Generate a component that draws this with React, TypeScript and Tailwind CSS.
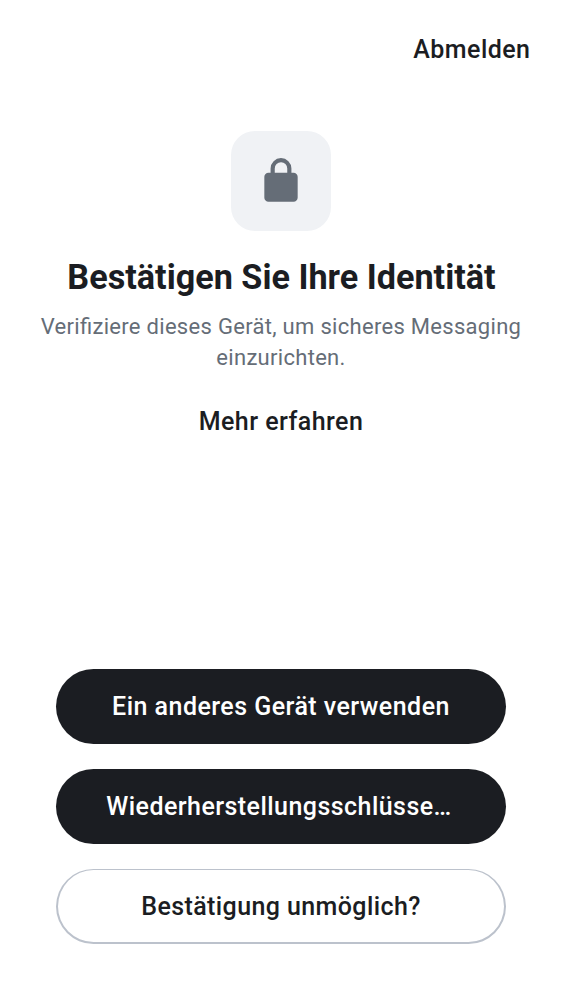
import React from "react";

function LockIcon() {
  return (
    <svg width="50" height="50" viewBox="0 0 24 24" fill="#656d77" aria-hidden="true">
      <path d="M6 22q-.825 0-1.412-.587A1.93 1.93 0 0 1 4 20V10q0-.825.588-1.412A1.93 1.93 0 0 1 6 8h1V6q0-2.075 1.463-3.537Q9.926 1 12 1t3.537 1.463T17 6v2h1q.825 0 1.413.588Q20 9.175 20 10v10q0 .824-.587 1.413A1.93 1.93 0 0 1 18 22zM9 8h6V6q0-1.25-.875-2.125A2.9 2.9 0 0 0 12 3q-1.25 0-2.125.875A2.9 2.9 0 0 0 9 6z" />
    </svg>
  );
}

const pill = "flex h-[75px] w-full items-center justify-center rounded-full text-[25px] font-medium";

export default function App() {
  return (
    <main className="flex h-[1000px] w-[562px] flex-col bg-white font-['Roboto',sans-serif] text-[#1b1d22]">
      <header className="flex h-[100px] justify-end px-[31.5px] pt-[34px]">
        <button className="h-8 text-[25px] leading-8 font-medium tracking-[0.45px]">Abmelden</button>
      </header>
      <section className="flex flex-1 flex-col items-center pt-[31px] text-center">
        <div className="flex h-[100px] w-[100px] items-center justify-center rounded-[24px] bg-[#f0f2f5]">
          <LockIcon />
        </div>
        <h1 className="mt-[24px] pl-px text-[34.2px] leading-[44px] font-bold whitespace-nowrap">Bestätigen Sie Ihre Identität</h1>
        <p className="mt-[12px] text-[22px] leading-[31px] tracking-[0.3px] text-[#656d77] [font-feature-settings:'liga'_1]">
          Verifiziere dieses Gerät, um sicheres Messaging
          <br />
          einzurichten.
        </p>
        <button className="mt-[33px] h-8 text-[25px] leading-8 font-medium tracking-[0.45px]">Mehr erfahren</button>
      </section>
      <div className="flex flex-col gap-[25px] px-14 pb-14">
        <button className={`${pill} bg-[#1b1d22] tracking-[0.46px] text-white`}>Ein anderes Gerät verwenden</button>
        <button className={`${pill} bg-[#1b1d22] pr-[4px] tracking-[0.45px] text-white`}>Wiederherstellungsschlüsse…</button>
        <button className={`${pill} border-x-[2px] border-t border-b-2 border-[#bcc2cc] pt-px tracking-[0.4px]`}>Bestätigung unmöglich?</button>
      </div>
    </main>
  );
}
